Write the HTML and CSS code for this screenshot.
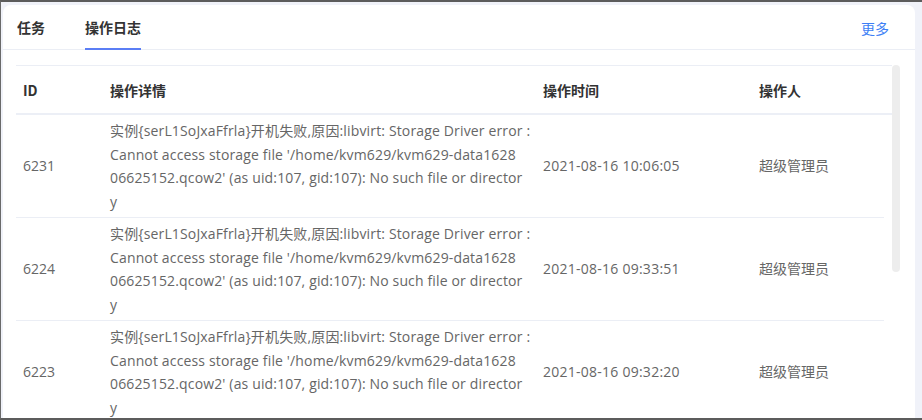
FILE: index.html
```html
<!DOCTYPE html>
<html lang="zh">
<head>
<meta charset="utf-8">
<title>操作日志</title>
<link rel="stylesheet" href="styles.css">
</head>
<body>
<div class="frame">
  <div class="card">
    <div class="tabbar">
      <div class="tabs">
        <div class="tab">任务</div>
        <div class="tab active">操作日志</div>
      </div>
      <a class="more">更多</a>
    </div>
    <div class="tablewrap">
      <div class="tablecol">
        <table class="thead">
          <colgroup><col class="c1"><col class="c2"><col class="c3"><col class="c4"><col class="cg"></colgroup>
          <tr><th class="id">ID</th><th>操作详情</th><th>操作时间</th><th>操作人</th><th></th></tr>
        </table>
        <table class="tbody">
          <colgroup><col class="c1"><col class="c2"><col class="c3"><col class="c4"></colgroup>
          <tr>
            <td class="id">6231</td>
            <td class="detail"><span class="ln">实例{serL1SoJxaFfrla}开机失败,原因:libvirt: Storage Driver error :</span><span class="ln">Cannot access storage file '/home/kvm629/kvm629-data1628</span><span class="ln">06625152.qcow2' (as uid:107, gid:107): No such file or director</span><span class="ln">y</span></td>
            <td class="time">2021-08-16 10:06:05</td>
            <td>超级管理员</td>
          </tr>
          <tr>
            <td class="id">6224</td>
            <td class="detail"><span class="ln">实例{serL1SoJxaFfrla}开机失败,原因:libvirt: Storage Driver error :</span><span class="ln">Cannot access storage file '/home/kvm629/kvm629-data1628</span><span class="ln">06625152.qcow2' (as uid:107, gid:107): No such file or director</span><span class="ln">y</span></td>
            <td class="time">2021-08-16 09:33:51</td>
            <td>超级管理员</td>
          </tr>
          <tr>
            <td class="id">6223</td>
            <td class="detail"><span class="ln">实例{serL1SoJxaFfrla}开机失败,原因:libvirt: Storage Driver error :</span><span class="ln">Cannot access storage file '/home/kvm629/kvm629-data1628</span><span class="ln">06625152.qcow2' (as uid:107, gid:107): No such file or director</span><span class="ln">y</span></td>
            <td class="time">2021-08-16 09:32:20</td>
            <td>超级管理员</td>
          </tr>
        </table>
      </div>
      <div class="scrollbar"><div class="thumb"></div></div>
    </div>
  </div>
</div>
</body>
</html>
```

FILE: styles.css
```css
html, body {
  margin: 0;
  padding: 0;
  width: 922px;
  height: 420px;
  overflow: hidden;
  background: #f0f2f9;
  font-family: "Open Sans", "Noto Sans CJK SC", sans-serif;
  font-size: 14px;
}
.frame {
  box-sizing: border-box;
  height: 420px;
  border-top: 2px solid #5c5c5c;
  border-bottom: 2px solid #5c5c5c;
  border-left: 1px solid #6a6a6a;
  padding: 3px 7px 0 2px;
}
.card {
  background: #fff;
  border-radius: 8px 8px 0 0;
  height: 100%;
  overflow: hidden;
}
.tabbar {
  height: 45px;
  box-sizing: border-box;
  border-bottom: 1px solid #ebeef5;
  display: flex;
  justify-content: space-between;
  align-items: stretch;
  padding: 0 26px 0 14px;
}
.tabs {
  display: flex;
  gap: 40px;
  margin-bottom: -1px;
}
.tab {
  font-family: "Noto Sans CJK SC", sans-serif;
  font-weight: 700;
  color: #333;
  display: flex;
  align-items: center;
  padding-top: 1px;
  box-sizing: border-box;
  border-bottom: 2px solid transparent;
}
.tab.active {
  border-bottom-color: #5b7ef5;
}
.more {
  font-family: "Noto Sans CJK SC", sans-serif;
  color: #3d7ff5;
  display: flex;
  align-items: center;
  padding-top: 1px;
}
.tablewrap {
  display: flex;
  padding: 15px 15px 0 13px;
}
.tablecol {
  width: 876px;
}
table {
  border-collapse: collapse;
  table-layout: fixed;
}
.thead { width: 876px; }
.tbody { width: 868px; }
.c1 { width: 86px; }
.c2 { width: 433px; }
.c3 { width: 216px; }
.c4 { width: 133px; }
.cg { width: 8px; }
th {
  font-family: "Noto Sans CJK SC", sans-serif;
  font-weight: 700;
  color: #333;
  text-align: left;
  height: 47px;
  padding: 0 8px;
  border-top: 1px solid #ebeef5;
  border-bottom: 2px solid #eceff6;
}
td {
  color: #666;
  padding: 4px 8px 4px;
  line-height: 23.5px;
  vertical-align: middle;
  border-bottom: 1px solid #ebeef5;
}
th.id, td.id {
  padding-left: 7px;
}
td.detail {
  letter-spacing: 0.15px;
  white-space: nowrap;
}
.ln {
  display: block;
}
td.time {
  letter-spacing: 0.25px;
}
.scrollbar {
  width: 8px;
}
.thumb {
  width: 8px;
  height: 207px;
  border-radius: 4px;
  background: #ededed;
}
```
